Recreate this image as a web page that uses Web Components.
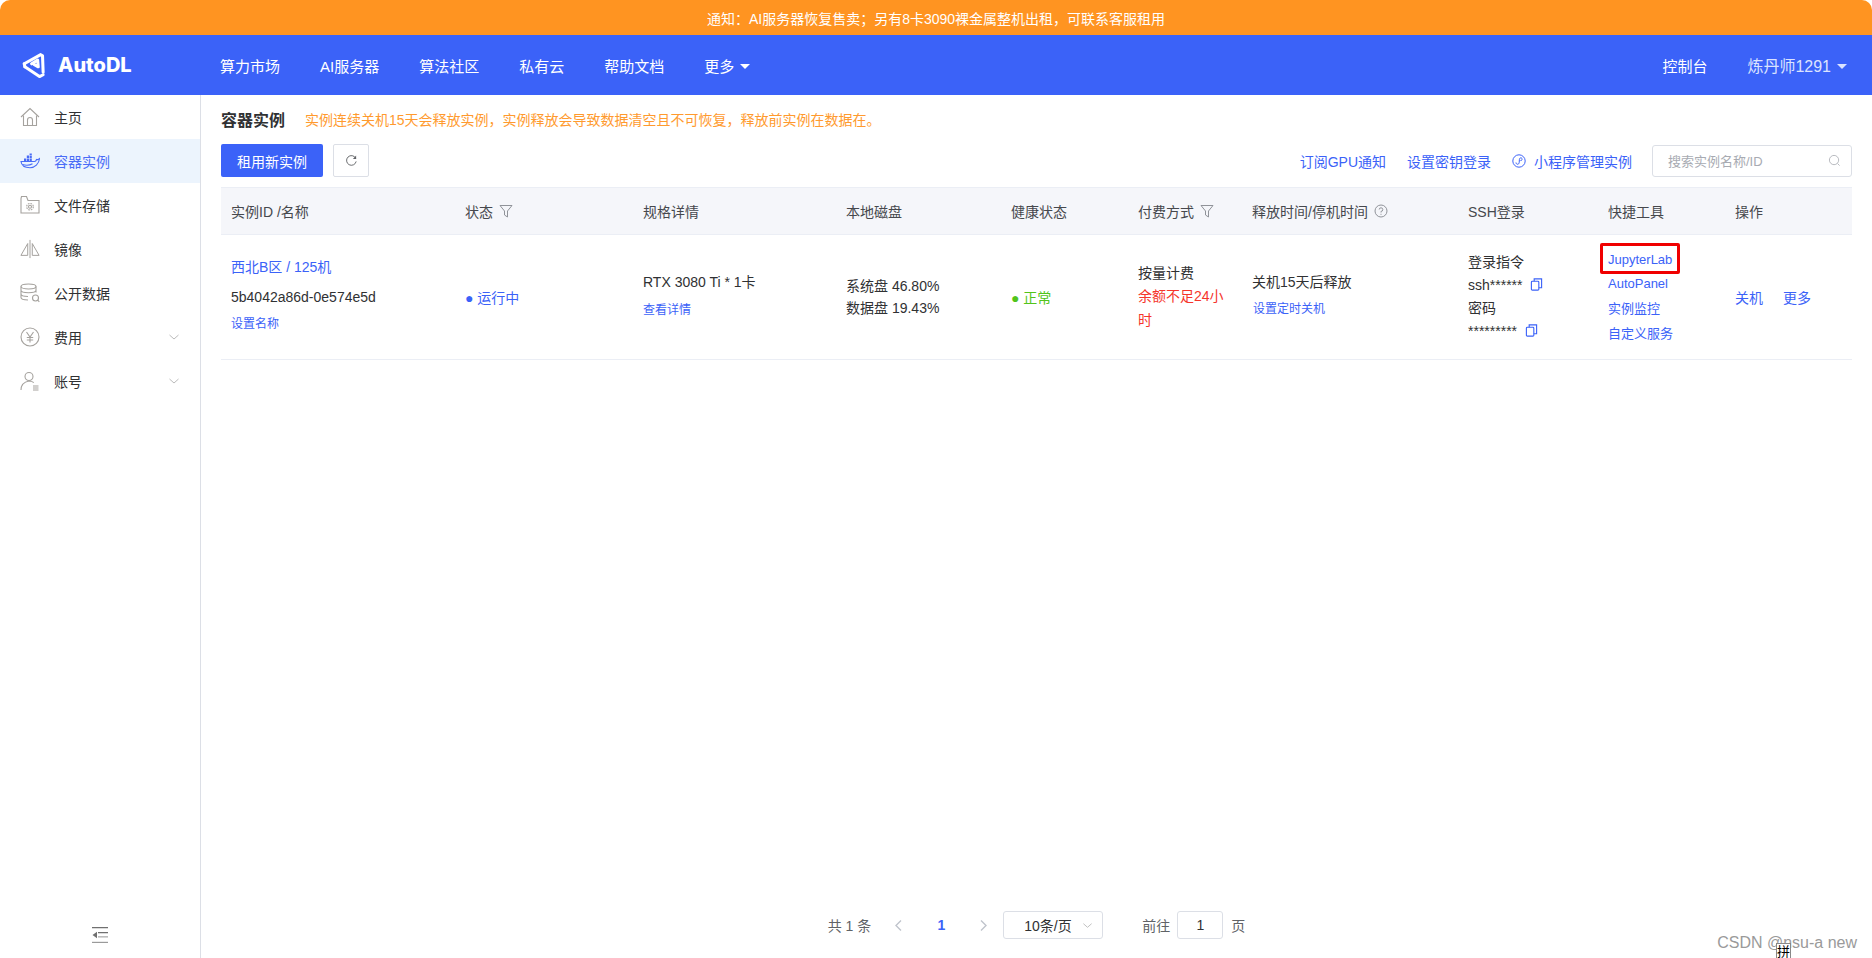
<!DOCTYPE html>
<html lang="zh">
<head>
<meta charset="utf-8">
<title>AutoDL</title>
<style>
  html, body { margin: 0; height: 100%; background: #fff; overflow: hidden; }
  body { font-family: "Liberation Sans", "Noto Sans CJK SC", sans-serif; font-size: 14px; color: #303133; }
</style>
</head>
<body>
<app-shell>
  <notice-bar slot="notice">通知：AI服务器恢复售卖；另有8卡3090裸金属整机出租，可联系客服租用</notice-bar>
  <top-nav slot="nav"></top-nav>
  <side-menu slot="side"></side-menu>
  <instance-page slot="main"></instance-page>
</app-shell>
<script>
const ICONS = {
  home: `<svg viewBox="0 0 20 20" fill="none" stroke="#a5a29e" stroke-width="1.1"><path d="M1 10 10 1.500 19 10"/><path d="M3.500 8.500V18.500H16.500V8.500"/><path d="M7.500 18.500V13a2.500 2.500 0 0 1 5 0v5.500"/></svg>`,
  docker: `<svg viewBox="0 0 20 20" fill="none" stroke="#4a6cf7" stroke-width="1.1"><path d="M1 10.500h13.500c1 0 1.700-.8 2-2 1 .3 2 .1 3-.8-.6 5-4.500 9-9.500 9C5 16.700 1.500 14.500 1 10.500Z"/><path d="M2.500 13.500c3 1 7 1 10-.8"/><path fill="#4a6cf7" stroke="none" d="M4 7.500h2.200v2.400H4zM6.800 7.500H9v2.400H6.800zM9.600 7.500h2.200v2.400H9.600zM6.800 4.500H9v2.400H6.800zM9.600 4.500h2.200v2.400H9.600zM9.600 2.500h2.200v1.500H9.600z"/></svg>`,
  folder: `<svg viewBox="0 0 20 20" fill="none" stroke="#a5a29e" stroke-width="1.1"><path d="M1 3.500V18h18V5.500H8L6.500 1.500H1.500Z"/><circle cx="10" cy="11.700" r="1.500"/><circle cx="10" cy="11.700" r="3.300" stroke-dasharray="1.600 1"/></svg>`,
  mirror: `<svg viewBox="0 0 22 20" fill="none" stroke="#a5a29e" stroke-width="1.1"><path d="M11 0v20" /><path d="M8.500 4 1 17h7.500Z"/><path d="M13.500 4 21 17h-7.500Z"/></svg>`,
  data: `<svg viewBox="0 0 20 20" fill="none" stroke="#a5a29e" stroke-width="1.1"><ellipse cx="8.500" cy="3.500" rx="7.500" ry="2.500"/><path d="M1 3.500v11c0 1.400 3 2.500 7 2.500M16 3.500v6M1 7.300c0 1.400 3.400 2.500 7.500 2.500s7.500-1 7.500-2.500M1 11c0 1.400 3 2.500 7 2.500"/><circle cx="15.500" cy="15" r="3"/><path d="m17.700 17.200 1.600 1.600"/></svg>`,
  yen: `<svg viewBox="0 0 20 20" fill="none" stroke="#a5a29e" stroke-width="1.1"><circle cx="10" cy="10" r="9"/><path d="M6.500 5 10 10l3.500-5M10 10v5.500M6.800 10.500h6.400M6.800 13h6.400"/></svg>`,
  user: `<svg viewBox="0 0 20 20" fill="none" stroke="#a5a29e" stroke-width="1.1"><circle cx="9" cy="5.500" r="4"/><path d="M1 19c0-4.500 3-8 8-9 2 0 3.500.6 4.800 1.600"/><path d="M13 15h5.500M13 17h5.500M13 19h5.500"/></svg>`,
  chevron: `<svg viewBox="0 0 12 12" fill="none" stroke="#bbb" stroke-width="1"><path d="M1.500 4 6 8l4.500-4"/></svg>`,
  filter: `<svg viewBox="0 0 14 14" fill="none" stroke="#909399" stroke-width="1"><path d="M1 1.500h12L8.500 7v6L5.500 11V7Z"/></svg>`,
  help: `<svg viewBox="0 0 14 14" fill="none" stroke="#909399" stroke-width="1"><circle cx="7" cy="7" r="6"/><path d="M5.200 5.500A1.800 1.800 0 1 1 7 7.400V8.500M7 9.800v1"/></svg>`,
  copy: `<svg viewBox="0 0 14 14" fill="none" stroke="#3b62f8" stroke-width="1.200"><rect x="1.500" y="3.500" width="8" height="9.500" rx="1"/><path d="M4.500 3.500V1h8v9.500h-3"/></svg>`,
  refresh: `<svg viewBox="0 0 14 14" fill="none" stroke="#606266" stroke-width="1"><path d="M11.500 4.500A5.200 5.200 0 1 0 12 8"/><path fill="#606266" stroke="none" d="M12 1.500V5.500H8.500Z"/></svg>`,
  search: `<svg viewBox="0 0 14 14" fill="none" stroke="#b3b5bb" stroke-width="1"><circle cx="6.500" cy="6.500" r="5"/><path d="m10.200 10.200 2.300 2.300"/></svg>`,
  mini: `<svg viewBox="0 0 14 14" fill="none" stroke="#3b62f8" stroke-width="1"><circle cx="7" cy="7" r="6.200"/><path d="M4 8.500c0 1.300 1 2 2 1.700 1-.3 1.300-1.200 1.300-3.200S7.700 3.800 8.800 3.800c1 0 1.700 1 1.200 2-.3.600-1 .9-1.600.8"/></svg>`,
  collapse: `<svg viewBox="0 0 18 18"><path fill="#707070" d="M1 1h16v1.200H1zM7 6h10v1.200H7zM1.500 9 6 5.800v6.400z"/><path fill="#bdbdbd" d="M7 10h10v1.600H7z"/><path fill="#9a9a9a" d="M1 15.800h16V17H1z"/></svg>`,
  logo: `<svg viewBox="14 18 84 92" fill="none" stroke="#fff" stroke-width="10" stroke-linecap="round" stroke-linejoin="round"><path d="M24 60 78 30 84 34 86 88"/><path d="M26 70 74 102 86 96"/><path d="M24 60 26 70"/><path d="M48 60 68 48 70 70 56 62"/></svg>`,
};

class UiIcon extends HTMLElement {
  connectedCallback() {
    const size = this.getAttribute("size") || 14;
    this.attachShadow({ mode: "open" }).innerHTML = `
      <style>
        :host { display: inline-flex; flex: none; width: ${size}px; height: ${size}px; }
        svg { width: 100%; height: 100%; display: block; }
      </style>
      ${ICONS[this.getAttribute("name")]}
    `;
  }
}
customElements.define("ui-icon", UiIcon);

class AppShell extends HTMLElement {
  constructor() {
    super();
    this.attachShadow({ mode: "open" }).innerHTML = `
      <style>
        :host { display: flex; flex-direction: column; height: 100vh; position: relative; overflow: hidden; }
        .body { flex: 1; display: flex; min-height: 0; }
        .mark { position: absolute; right: 15px; bottom: 6px; font-size: 16px; line-height: 18px; color: #9a9a9a; white-space: nowrap; }
        .ime { position: absolute; left: 1776px; top: 943px; width: 15px; height: 15px; border: 1px solid #888; border-bottom: 0; box-sizing: border-box; font-size: 13px; line-height: 15px; color: #000; text-align: center; background: #fff; }
      </style>
      <slot name="notice"></slot>
      <slot name="nav"></slot>
      <div class="body">
        <slot name="side"></slot>
        <slot name="main"></slot>
      </div>
      <div class="mark">CSDN @nsu-a new</div>
      <div class="ime">拼</div>
    `;
  }
}
customElements.define("app-shell", AppShell);

class NoticeBar extends HTMLElement {
  constructor() {
    super();
    this.attachShadow({ mode: "open" }).innerHTML = `
      <style>
        :host { display: flex; flex: none; height: 35px; align-items: center; justify-content: center; background: #ff9421; color: #fff; font-size: 14px; border-radius: 10px 10px 0 0; }
      </style>
      <slot></slot>
    `;
  }
}
customElements.define("notice-bar", NoticeBar);

class TopNav extends HTMLElement {
  constructor() {
    super();
    const items = ["算力市场", "AI服务器", "算法社区", "私有云", "帮助文档"];
    this.attachShadow({ mode: "open" }).innerHTML = `
      <style>
        :host { display: flex; flex: none; height: 60px; align-items: center; background: #3b62f8; color: #fff; font-size: 15px; padding: 0 25px 0 20px; }
        .brand { display: flex; align-items: center; width: 200px; gap: 10px; }
        .brand b { font-family: Inter, "Liberation Sans", sans-serif; font-size: 20px; font-weight: 800; }
        .links { display: flex; gap: 40px; align-items: center; }
        .right { margin-left: auto; display: flex; gap: 40px; align-items: center; }
        .drop { display: inline-flex; align-items: center; gap: 6px; }
        .drop i { width: 0; height: 0; margin-top: 3px; border: 5px solid transparent; border-top: 5px solid currentColor; border-bottom: 0; }
        .user { color: #dbe3ff; font-size: 16px; }
      </style>
      <div class="brand"><ui-icon name="logo" size="28"></ui-icon><b>AutoDL</b></div>
      <div class="links">
        ${items.map((t) => `<span>${t}</span>`).join("")}
        <span class="drop">更多<i></i></span>
      </div>
      <div class="right">
        <span>控制台</span>
        <span class="drop user">炼丹师1291<i></i></span>
      </div>
    `;
  }
}
customElements.define("top-nav", TopNav);

class SideMenu extends HTMLElement {
  constructor() {
    super();
    const items = [
      ["home", "主页"],
      ["docker", "容器实例", "active"],
      ["folder", "文件存储"],
      ["mirror", "镜像"],
      ["data", "公开数据"],
      ["yen", "费用", "more"],
      ["user", "账号", "more"],
    ];
    this.attachShadow({ mode: "open" }).innerHTML = `
      <style>
        :host { display: flex; flex: none; flex-direction: column; width: 200px; border-right: 1px solid #dcdfe6; font-size: 14px; color: #303133; }
        .item { display: flex; align-items: center; height: 44px; padding-left: 20px; gap: 14px; }
        .item.active { background: #ecf4fd; color: #4a6cf7; }
        .item ui-icon:last-child { margin-left: auto; margin-right: 20px; }
        .fold { margin-top: auto; margin-bottom: 14px; display: flex; justify-content: center; }
      </style>
      ${items.map(([icon, label, flag]) => `
        <div class="item ${flag === "active" ? "active" : ""}">
          <ui-icon name="${icon}" size="20"></ui-icon><span>${label}</span>
          ${flag === "more" ? `<ui-icon name="chevron" size="12"></ui-icon>` : ""}
        </div>`).join("")}
      <div class="fold"><ui-icon name="collapse" size="18"></ui-icon></div>
    `;
  }
}
customElements.define("side-menu", SideMenu);

class InstanceToolbar extends HTMLElement {
  constructor() {
    super();
    this.attachShadow({ mode: "open" }).innerHTML = `
      <style>
        :host { display: flex; align-items: center; height: 33px; margin: 0 0 10px; font-size: 14px; color: #3b62f8; }
        .new { display: flex; align-items: center; justify-content: center; width: 102px; height: 33px; background: #3b62f8; color: #fff; border-radius: 2px; }
        .ref { display: flex; align-items: center; justify-content: center; width: 36px; height: 33px; box-sizing: border-box; margin-left: 10px; border: 1px solid #dcdfe6; border-radius: 2px; }
        .right { margin-left: auto; display: flex; align-items: center; }
        .right > span { display: inline-flex; align-items: center; gap: 8px; margin-right: 21px; }
        .right > span:nth-child(3) { margin-right: 20px; }
        .search { display: flex; align-items: center; justify-content: space-between; width: 200px; height: 32px; box-sizing: border-box; padding: 0 10px 0 15px; border: 1px solid #dcdfe6; border-radius: 3px; color: #a8abb2; font-size: 13px; }
      </style>
      <div class="new">租用新实例</div>
      <div class="ref"><ui-icon name="refresh" size="13"></ui-icon></div>
      <div class="right">
        <span>订阅GPU通知</span>
        <span>设置密钥登录</span>
        <span><ui-icon name="mini" size="14"></ui-icon>小程序管理实例</span>
        <div class="search">搜索实例名称/ID<ui-icon name="search" size="13"></ui-icon></div>
      </div>
    `;
  }
}
customElements.define("instance-toolbar", InstanceToolbar);

class InstanceTable extends HTMLElement {
  constructor() {
    super();
    const heads = [
      "实例ID /名称",
      `状态 <ui-icon name="filter" size="14"></ui-icon>`,
      "规格详情",
      "本地磁盘",
      "健康状态",
      `付费方式 <ui-icon name="filter" size="14"></ui-icon>`,
      `释放时间/停机时间 <ui-icon name="help" size="14"></ui-icon>`,
      "SSH登录",
      "快捷工具",
      "操作",
    ];
    this.attachShadow({ mode: "open" }).innerHTML = `
      <style>
        :host { display: grid; grid-template-columns: 234px 178px 203px 165px 127px 114px 216px 140px 127px 127px; font-size: 14px; color: #303133; }
        .th, .td { box-sizing: border-box; }
        .th { display: flex; align-items: center; gap: 6px; height: 48px; padding-left: 10px; background: #f5f6fa; border-top: 1px solid #ebeef5; border-bottom: 1px solid #ebeef5; color: #46484d; }
        .td { display: flex; flex-direction: column; justify-content: center; height: 125px; padding-left: 10px; border-bottom: 1px solid #ebeef5; }
        .l { color: #3b62f8; }
        .s { font-size: 12px; color: #3b62f8; }
        .line { display: flex; align-items: center; gap: 8px; }
        .line ui-icon { margin-top: -2px; }
        .ok { color: #52c41a; }
        .warn { color: #f5352b; }
        .tools { font-size: 13px; color: #3b62f8; line-height: 24.700px; }
        .jupyter { position: relative; width: max-content; }
        .jupyter::after { content: ""; position: absolute; left: -8px; right: -8px; top: -5px; bottom: -2px; border: 3px solid #f00000; border-radius: 2px; }
        .ops { flex-direction: row; align-items: center; gap: 20px; justify-content: flex-start; }
      </style>
      ${heads.map((h) => `<div class="th">${h}</div>`).join("")}
      <div class="td" style="padding-bottom:5px">
        <div class="l" style="line-height:20px">西北B区 / 125机</div>
        <div style="line-height:20px;margin-top:10px">5b4042a86d-0e574e5d</div>
        <div class="s" style="line-height:18px;margin-top:8px">设置名称</div>
      </div>
      <div class="td l">● 运行中</div>
      <div class="td" style="padding-bottom:4px">
        <div style="line-height:20px">RTX 3080 Ti * 1卡</div>
        <div class="s" style="line-height:18px;margin-top:9px">查看详情</div>
      </div>
      <div class="td" style="line-height:22px"><div>系统盘 46.80%</div><div>数据盘 19.43%</div></div>
      <div class="td ok">● 正常</div>
      <div class="td" style="line-height:23.500px;padding-right:10px">
        <div>按量计费</div>
        <div class="warn">余额不足24小时</div>
      </div>
      <div class="td" style="padding-bottom:4px">
        <div style="line-height:20px">关机15天后释放</div>
        <div class="s" style="line-height:18px;margin-top:8px;margin-left:1px">设置定时关机</div>
      </div>
      <div class="td" style="line-height:23px">
        <div>登录指令</div>
        <div class="line">ssh****** <ui-icon name="copy" size="13"></ui-icon></div>
        <div>密码</div>
        <div class="line">********* <ui-icon name="copy" size="13"></ui-icon></div>
      </div>
      <div class="td tools">
        <div class="jupyter">JupyterLab</div>
        <div>AutoPanel</div>
        <div>实例监控</div>
        <div>自定义服务</div>
      </div>
      <div class="td l ops"><span>关机</span><span>更多</span></div>
    `;
  }
}
customElements.define("instance-table", InstanceTable);

class PagerBar extends HTMLElement {
  constructor() {
    super();
    this.attachShadow({ mode: "open" }).innerHTML = `
      <style>
        :host { display: flex; align-items: center; justify-content: center; height: 28px; font-size: 14px; color: #606266; }
        .arrow { width: 10px; height: 13px; color: #c0c4cc; }
        .arrow svg { display: block; width: 100%; height: 100%; }
        .cur { width: 12px; text-align: center; color: #3b62f8; font-weight: 700; margin: 0 31px; }
        .sel { display: flex; align-items: center; justify-content: space-between; box-sizing: border-box; width: 100px; height: 28px; margin-left: 15px; padding: 0 9px 0 20px; border: 1px solid #dcdfe6; border-radius: 3px; color: #303133; }
        .go { margin-left: 39px; }
        .inp { display: flex; align-items: center; justify-content: center; box-sizing: border-box; width: 46px; height: 28px; margin: 0 8px 0 7px; border: 1px solid #dcdfe6; border-radius: 3px; color: #303133; }
      </style>
      <span style="margin-right:23px">共 1 条</span>
      <span class="arrow"><svg viewBox="0 0 10 13" fill="none" stroke="currentColor" stroke-width="1.400"><path d="M7 1.500 2 6.500l5 5"/></svg></span>
      <span class="cur">1</span>
      <span class="arrow"><svg viewBox="0 0 10 13" fill="none" stroke="currentColor" stroke-width="1.400"><path d="M3 1.500 8 6.500l-5 5"/></svg></span>
      <div class="sel">10条/页<ui-icon name="chevron" size="11"></ui-icon></div>
      <span class="go">前往</span>
      <div class="inp">1</div>
      <span>页</span>
    `;
  }
}
customElements.define("pager-bar", PagerBar);

class InstancePage extends HTMLElement {
  constructor() {
    super();
    this.attachShadow({ mode: "open" }).innerHTML = `
      <style>
        :host { display: flex; flex: 1; min-width: 0; flex-direction: column; padding: 12px 20px 19px; }
        .head { display: flex; align-items: center; height: 24px; margin-bottom: 13px; }
        h1 { margin: 0; font-size: 16px; font-weight: 700; color: #303133; }
        .tip { margin-left: 20px; font-size: 14px; color: #ff9a2e; }
        pager-bar { margin-top: auto; }
      </style>
      <div class="head">
        <h1>容器实例</h1>
        <span class="tip">实例连续关机15天会释放实例，实例释放会导致数据清空且不可恢复，释放前实例在数据在。</span>
      </div>
      <instance-toolbar></instance-toolbar>
      <instance-table></instance-table>
      <pager-bar></pager-bar>
    `;
  }
}
customElements.define("instance-page", InstancePage);
</script>
</body>
</html>
